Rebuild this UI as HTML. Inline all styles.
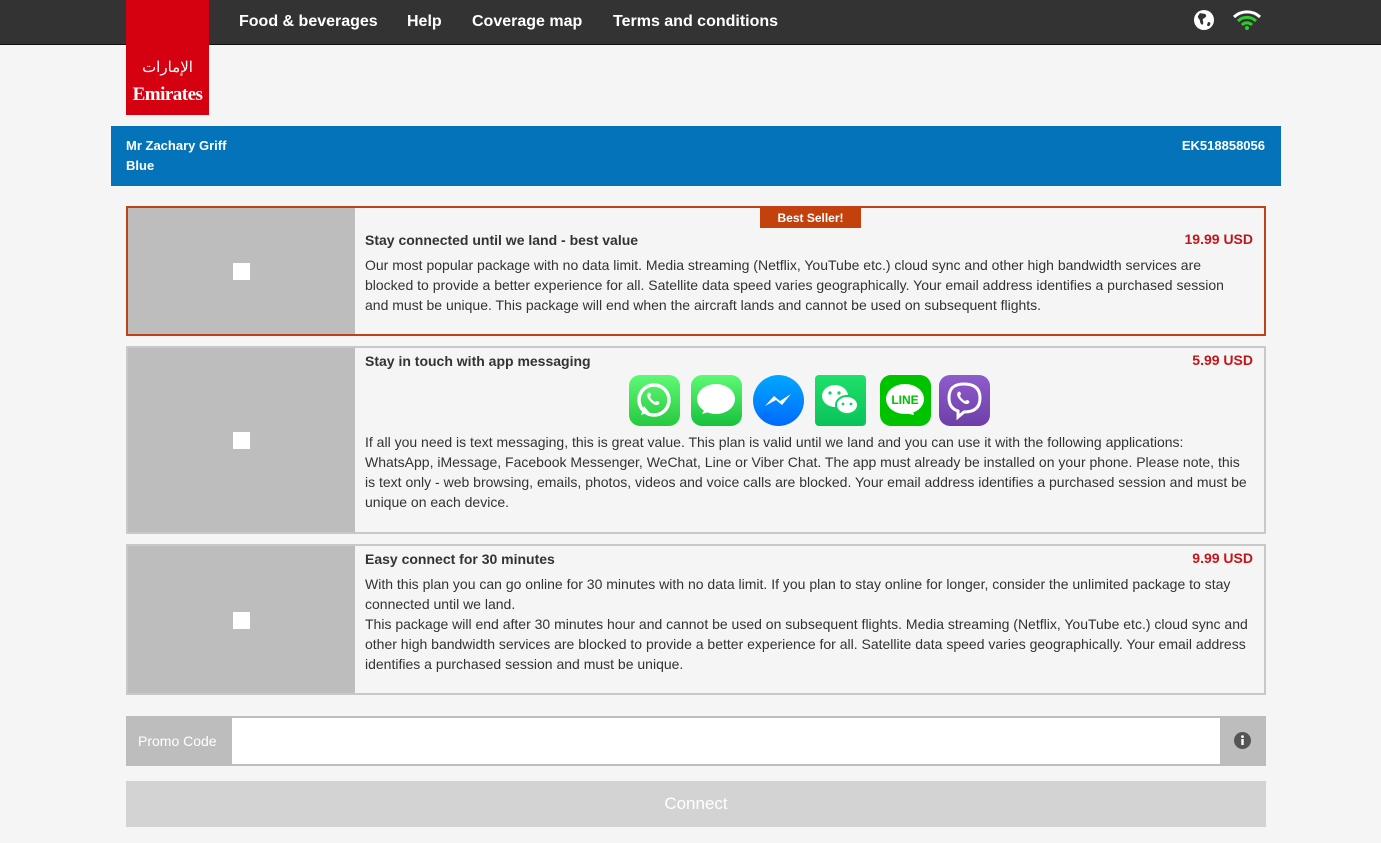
<!DOCTYPE html>
<html><head><meta charset="utf-8"><style>
*{box-sizing:border-box;margin:0;padding:0}
body{width:1381px;height:843px;background:#f5f5f5;font-family:"Liberation Sans",Arial,sans-serif;position:relative;overflow:hidden;color:#333}
.top{position:absolute;left:0;top:0;width:1381px;height:45px;background:#333;border-bottom:1px solid #111}
.nav{position:absolute;top:13px;color:#fff;font-weight:bold;font-size:16px}
.logo{position:absolute;left:126px;top:0;width:83px;height:115px;background:#d50010;color:#fff;text-align:center}
.band{position:absolute;left:111px;top:126px;width:1170px;height:60px;background:#0573b9;color:#fff;font-weight:bold;font-size:13px;padding:10px 15px;line-height:20px}
.card{position:absolute;left:126px;width:1140px;border:2px solid #c8c8c8;background:#f5f5f5}
.card .side{position:absolute;left:0;top:0;bottom:0;width:227px;background:#bdbdbd}
.card .cb{position:absolute;left:105px;width:17px;height:17px;background:#fff;top:50%;margin-top:-8px}
.card .body{margin-left:227px;padding:8px 12px 0 10px;font-size:14px;line-height:20px}
.card h3{font-size:14px;font-weight:bold;line-height:20px;margin-bottom:5px}
.price{position:absolute;right:11px;color:#c0161b;font-weight:bold;font-size:14px}
.ic{position:absolute;top:375px;width:51px;height:51px;border-radius:11px}
</style></head><body>
<div class="top"></div>
<div class="nav" style="left:239px">Food &amp; beverages</div>
<div class="nav" style="left:407px">Help</div>
<div class="nav" style="left:472px">Coverage map</div>
<div class="nav" style="left:613px">Terms and conditions</div>
<svg style="position:absolute;left:1193px;top:9px" width="22" height="22" viewBox="0 0 22 22"><circle cx="11" cy="11" r="10" fill="#fff"/><path d="M7 4c2 1 5 0 6 2s-2 3-3 4 1 3 0 5-3-1-3-3-3-3-2-5zM15 13c2 0 3 1 2 3s-3 1-3 0z" fill="#333"/></svg>
<svg style="position:absolute;left:1232px;top:9px" width="30" height="22" viewBox="0 0 30 22"><path d="M2 8a19 19 0 0 1 26 0" stroke="#fff" stroke-width="3" fill="none"/><path d="M6 12a13 13 0 0 1 18 0" stroke="#2ecc2e" stroke-width="3" fill="none"/><path d="M10 16a7 7 0 0 1 10 0" stroke="#2ecc2e" stroke-width="3" fill="none"/><circle cx="15" cy="19" r="2" fill="#2ecc2e"/></svg>
<div class="logo"><div style="position:absolute;top:58px;left:0;right:0;font-family:'Liberation Serif',serif;font-size:15px;line-height:20px">ﺍﻹﻣﺎﺭﺍﺕ</div><div style="position:absolute;top:84px;left:0;right:0;font-family:'Liberation Serif',serif;font-weight:bold;font-size:19px;letter-spacing:-0.5px">Emirates</div></div>
<div class="band">Mr Zachary Griff<br>Blue<span style="position:absolute;right:16px;top:10px">EK518858056</span></div>

<div class="card" style="top:206px;height:130px;border-color:#c0401a">
<div class="side"><div class="cb"></div></div>
<div style="position:absolute;left:632px;top:0;width:101px;height:20px;background:#c2410c;color:#fff;font-size:12px;font-weight:bold;text-align:center;line-height:20px">Best Seller!</div>
<div class="price" style="top:23px">19.99 USD</div>
<div class="body" style="padding-top:22px;padding-right:30px"><h3>Stay connected until we land - best value</h3>Our most popular package with no data limit. Media streaming (Netflix, YouTube etc.) cloud sync and other high bandwidth services are blocked to provide a better experience for all. Satellite data speed varies geographically. Your email address identifies a purchased session and must be unique. This package will end when the aircraft lands and cannot be used on subsequent flights.</div>
</div>

<div class="card" style="top:346px;height:188px">
<div class="side"><div class="cb"></div></div>
<div class="price" style="top:4px">5.99 USD</div>
<div class="body" style="padding-top:3px"><h3 style="margin-bottom:0">Stay in touch with app messaging</h3><div style="height:61px"></div>If all you need is text messaging, this is great value. This plan is valid until we land and you can use it with the following applications: WhatsApp, iMessage, Facebook Messenger, WeChat, Line or Viber Chat. The app must already be installed on your phone. Please note, this is text only - web browsing, emails, photos, videos and voice calls are blocked. Your email address identifies a purchased session and must be unique on each device.</div>
</div>
<div class="ic" style="left:629px;background:linear-gradient(#5ef975,#27c93f)"><svg width="51" height="51"><circle cx="25" cy="25" r="15" stroke="#fff" stroke-width="3.5" fill="none"/><path d="M12 40l3-9 5 6z" fill="#fff"/><path d="M19 18c1-1 3 0 3 2l-1 2c1 2 3 4 5 5l2-1c2 0 3 2 2 3-2 2-5 1-8-2s-5-6-3-9z" fill="#fff"/></svg></div>
<div class="ic" style="left:691px;background:linear-gradient(#5ef975,#18c13c)"><svg width="51" height="51"><ellipse cx="25" cy="24" rx="19" ry="15" fill="#fff"/><path d="M11 39l4-8 6 5z" fill="#fff"/></svg></div>
<div class="ic" style="left:753px;border-radius:50%;background:linear-gradient(#00a8ff,#006aff)"><svg width="51" height="51"><path d="M10 46l1-10 8 4z" fill="#0a6df7"/><path d="M12 31l9-10 6 5 11-7-9 11-6-5z" fill="#fff"/></svg></div>
<div class="ic" style="left:815px;border-radius:4px;background:linear-gradient(#1fe06a,#0ac25a)"><svg width="51" height="51"><ellipse cx="20" cy="21" rx="13" ry="11" fill="#fff"/><ellipse cx="32" cy="30" rx="11" ry="9" fill="#fff" stroke="#0fd060" stroke-width="2"/><circle cx="15" cy="18" r="1.6" fill="#0fd060"/><circle cx="24" cy="18" r="1.6" fill="#0fd060"/><circle cx="28" cy="29" r="1.4" fill="#0fd060"/><circle cx="36" cy="29" r="1.4" fill="#0fd060"/></svg></div>
<div class="ic" style="left:880px;background:#00c300"><svg width="51" height="51"><ellipse cx="25" cy="24" rx="19" ry="15" fill="#fff"/><path d="M24 38l8-4 2 6z" fill="#fff"/><text x="25" y="29" text-anchor="middle" font-family="Liberation Sans" font-weight="bold" font-size="12" fill="#00c300">LINE</text></svg></div>
<div class="ic" style="left:939px;background:linear-gradient(#8e5ccc,#6e3fa8)"><svg width="51" height="51"><path d="M25 9c10 0 16 4 16 14s-6 14-16 14l-6 5v-6c-6-2-9-6-9-13 0-10 5-14 15-14z" stroke="#fff" stroke-width="3" fill="none"/><path d="M19 17c1-1 3 0 3 2l-1 2c1 2 3 4 5 5l2-1c2 0 3 2 2 3-2 2-5 1-8-2s-5-6-3-9z" fill="#fff"/></svg></div>

<div class="card" style="top:544px;height:151px">
<div class="side"><div class="cb"></div></div>
<div class="price" style="top:4px">9.99 USD</div>
<div class="body" style="padding-top:3px"><h3>Easy connect for 30 minutes</h3>With this plan you can go online for 30 minutes with no data limit. If you plan to stay online for longer, consider the unlimited package to stay connected until we land.<br>This package will end after 30 minutes hour and cannot be used on subsequent flights. Media streaming (Netflix, YouTube etc.) cloud sync and other high bandwidth services are blocked to provide a better experience for all. Satellite data speed varies geographically. Your email address identifies a purchased session and must be unique.</div>
</div>

<div style="position:absolute;left:126px;top:716px;width:1140px;height:50px;background:#bdbdbd">
<div style="position:absolute;left:12px;top:17px;color:#fff;font-size:14px">Promo Code</div>
<div style="position:absolute;left:106px;top:2px;width:988px;height:46px;background:#fff"></div>
<svg style="position:absolute;left:1108px;top:16px" width="17" height="17" viewBox="0 0 17 17"><circle cx="8.5" cy="8.5" r="8.5" fill="#555"/><rect x="7.3" y="7" width="2.4" height="6" fill="#fff"/><circle cx="8.5" cy="4.6" r="1.4" fill="#fff"/></svg>
</div>
<div style="position:absolute;left:126px;top:781px;width:1140px;height:46px;background:#d3d3d3;color:#fff;font-size:17px;text-align:center;line-height:46px">Connect</div>
</body></html>
